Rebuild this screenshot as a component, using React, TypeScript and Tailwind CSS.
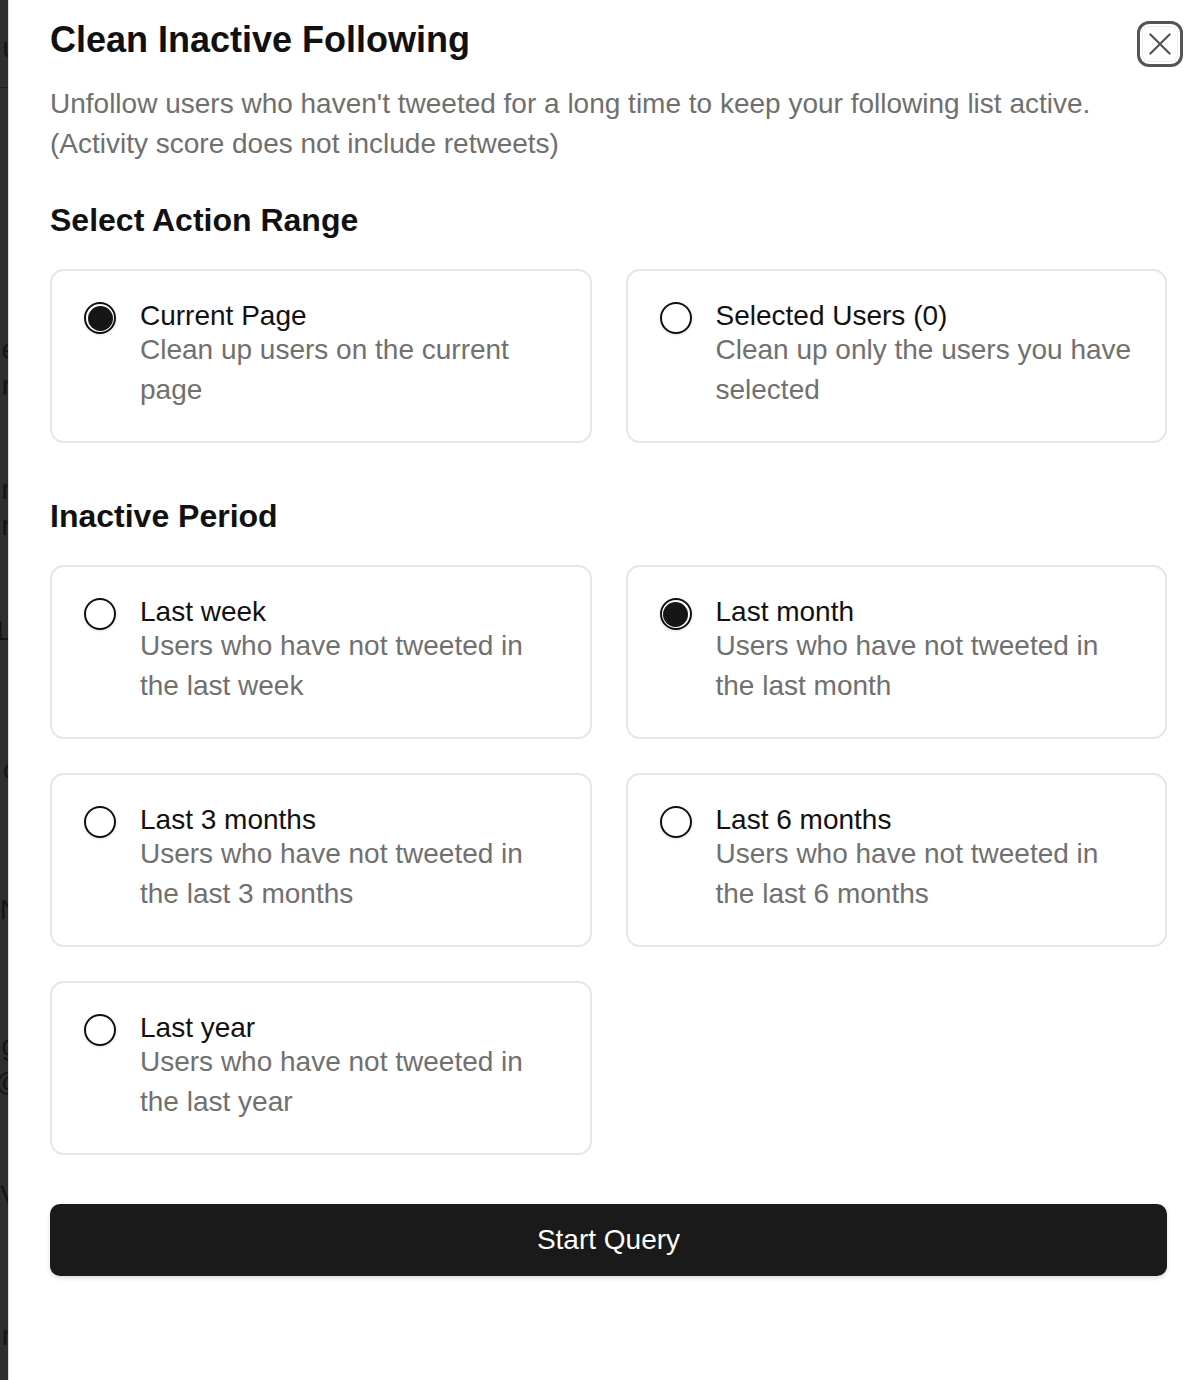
import React, { useState } from "react";

type Opt = { id: string; title: string; desc: string };

const rangeOpts: Opt[] = [
  { id: "current", title: "Current Page", desc: "Clean up users on the current page" },
  { id: "selected", title: "Selected Users (0)", desc: "Clean up only the users you have selected" },
];

const periodOpts: Opt[] = [
  { id: "week", title: "Last week", desc: "Users who have not tweeted in the last week" },
  { id: "month", title: "Last month", desc: "Users who have not tweeted in the last month" },
  { id: "3m", title: "Last 3 months", desc: "Users who have not tweeted in the last 3 months" },
  { id: "6m", title: "Last 6 months", desc: "Users who have not tweeted in the last 6 months" },
  { id: "year", title: "Last year", desc: "Users who have not tweeted in the last year" },
];

function Radio({ checked }: { checked: boolean }) {
  return (
    <div className="mt-[1px] h-[32px] w-[32px] shrink-0 rounded-full border-2 border-[#111] bg-white p-[1.5px] shadow-[0_1px_3px_rgba(0,0,0,0.12)]">
      {checked && <div className="h-full w-full rounded-full bg-[#161616]" />}
    </div>
  );
}

function Card({ opt, checked, onClick }: { opt: Opt; checked: boolean; onClick: () => void }) {
  return (
    <div
      onClick={onClick}
      className="flex h-[174px] cursor-pointer gap-[24px] rounded-[14px] border-2 border-[#e6e6e6] bg-white pl-[32px] pr-[26px] pt-[30px]"
    >
      <Radio checked={checked} />
      <div className="flex flex-col">
        <div className="text-[28px] leading-[29px] text-[#111]">{opt.title}</div>
        <div className="text-[28px] leading-[40px] text-[#707070]">{opt.desc}</div>
      </div>
    </div>
  );
}

const fragments: { top: number; text: string; right: number }[] = [
  { top: 28, text: "u", right: -10 },
  { top: 330, text: "e", right: -9 },
  { top: 366, text: "r", right: -3 },
  { top: 470, text: "n", right: -9 },
  { top: 506, text: "n", right: -9 },
  { top: 611, text: "L", right: -4 },
  { top: 750, text: "c", right: -9 },
  { top: 890, text: "N", right: -12 },
  { top: 1026, text: "g", right: -9 },
  { top: 1062, text: "@", right: -16 },
  { top: 1176, text: "V", right: -11 },
  { top: 1316, text: "r", right: -3 },
];

export default function App() {
  const [range, setRange] = useState("current");
  const [period, setPeriod] = useState("month");

  return (
    <div className="flex min-h-[1380px] w-[1200px] bg-white font-['Liberation_Sans',Arial,sans-serif]">
      <div className="relative w-[8px] shrink-0 overflow-hidden bg-[#2e2e2e]">
        {fragments.map((f, i) => (
          <span
            key={i}
            className="absolute text-[28px] leading-[40px] text-[#141414]"
            style={{ top: f.top, right: f.right }}
          >
            {f.text}
          </span>
        ))}
        <div className="absolute left-0 top-[87px] h-px w-full bg-[#1c1c1c]" />
      </div>
      <div className="w-px shrink-0 bg-[#dcdcdc]" />
      <div className="relative flex-1 pb-[40px] pl-[41px] pr-[33px] pt-[20px]">
        <h1 className="text-[36px] font-bold leading-[40px] text-[#111]">Clean Inactive Following</h1>
        <p className="mt-[24px] text-[28px] leading-[40px] text-[#6f6f6f]">
          Unfollow users who haven't tweeted for a long time to keep your following list active. (Activity score does
          not include retweets)
        </p>

        <h2 className="mt-[36px] text-[32px] font-bold leading-[40px] text-[#111]">Select Action Range</h2>
        <div className="mt-[29px] grid grid-cols-2 gap-[34px]">
          {rangeOpts.map((o) => (
            <Card key={o.id} opt={o} checked={range === o.id} onClick={() => setRange(o.id)} />
          ))}
        </div>

        <h2 className="mt-[53px] text-[32px] font-bold leading-[40px] text-[#111]">Inactive Period</h2>
        <div className="mt-[29px] grid grid-cols-2 gap-[34px]">
          {periodOpts.map((o) => (
            <Card key={o.id} opt={o} checked={period === o.id} onClick={() => setPeriod(o.id)} />
          ))}
        </div>

        <button className="mt-[49px] flex h-[72px] w-full items-center justify-center rounded-[10px] bg-[#1a1a1a] text-[28px] text-white shadow-[0_2px_4px_rgba(0,0,0,0.15)]">
          Start Query
        </button>

        <button className="absolute right-[17px] top-[21px] flex h-[46px] w-[46px] items-center justify-center rounded-[12px] border-[3px] border-[#555] bg-white">
          <div className="flex h-[36px] w-[36px] items-center justify-center rounded-[8px] border border-[#ececec]">
            <svg width="28" height="28" viewBox="0 0 24 24" fill="none">
              <path d="M3.8 3.8L20.2 20.2M20.2 3.8L3.8 20.2" stroke="#555" strokeWidth="1.9" strokeLinecap="round" />
            </svg>
          </div>
        </button>
      </div>
    </div>
  );
}
